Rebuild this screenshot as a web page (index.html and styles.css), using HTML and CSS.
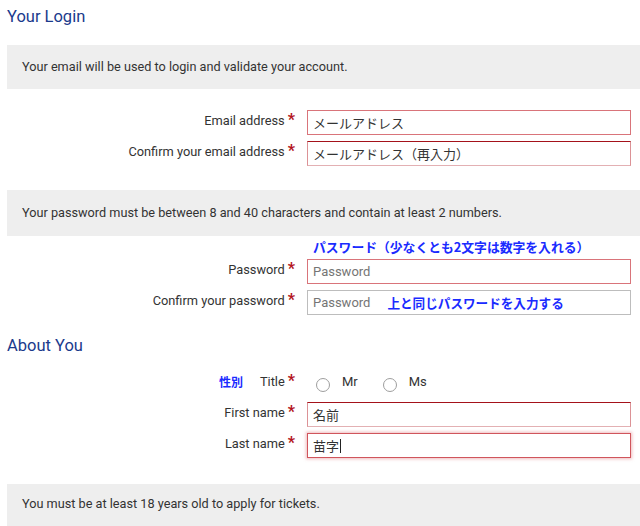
FILE: index.html
```html
<!DOCTYPE html>
<html lang="ja">
<head>
<meta charset="utf-8">
<title>Your Login</title>
<link rel="stylesheet" href="styles.css">
</head>
<body>
<div class="page">
  <h2 class="section-title">Your Login</h2>
  <div class="notice notice-first">Your email will be used to login and validate your account.</div>

  <div class="form-block form-email">
    <div class="form-row">
      <div class="label">Email address<span class="req">*</span></div>
      <div class="input input-error">メールアドレス</div>
    </div>
    <div class="form-row">
      <div class="label">Confirm your email address<span class="req">*</span></div>
      <div class="input input-error-dark">メールアドレス（再入力）</div>
    </div>
  </div>

  <div class="notice notice-password">Your password must be between 8 and 40 characters and contain at least 2 numbers.</div>

  <div class="form-block form-password">
    <div class="annotation-row"><span class="annotation">パスワード（少なくとも2文字は数字を入れる）</span></div>
    <div class="form-row">
      <div class="label">Password<span class="req">*</span></div>
      <div class="input input-error"><span class="placeholder">Password</span></div>
    </div>
    <div class="form-row">
      <div class="label">Confirm your password<span class="req">*</span></div>
      <div class="input input-plain"><span class="placeholder">Password</span><span class="annotation annotation-inline">上と同じパスワードを入力する</span></div>
    </div>
  </div>

  <h2 class="section-title section-about">About You</h2>

  <div class="form-block form-about">
    <div class="form-row title-row">
      <div class="label"><span class="annotation annotation-label">性別</span>Title<span class="req">*</span></div>
      <div class="radios">
        <label class="radio"><span class="radio-circle"></span><span class="radio-text">Mr</span></label>
        <label class="radio"><span class="radio-circle"></span><span class="radio-text">Ms</span></label>
      </div>
    </div>
    <div class="form-row">
      <div class="label">First name<span class="req">*</span></div>
      <div class="input input-error-dark">名前</div>
    </div>
    <div class="form-row">
      <div class="label">Last name<span class="req">*</span></div>
      <div class="input input-focus">苗字<span class="caret"></span></div>
    </div>
  </div>

  <div class="notice notice-age">You must be at least 18 years old to apply for tickets.</div>
</div>
</body>
</html>
```

FILE: styles.css
```css
html, body {
  margin: 0;
  padding: 0;
  background: #ffffff;
}

body {
  font-family: Roboto, "Noto Sans CJK JP", sans-serif;
  color: #333333;
  overflow: hidden;
}

.page {
  padding-left: 7px;
  padding-top: 6px;
}

.section-title {
  margin: 0;
  font-family: Roboto, sans-serif;
  font-weight: 400;
  font-size: 16.5px;
  line-height: 21px;
  color: #1b3a8c;
}

.section-about {
  margin-top: 20px;
}

.notice {
  background: #eeeeee;
  font-size: 12.7px;
  line-height: 14px;
  color: #333333;
  padding: 15px 15px;
  display: flex;
  align-items: center;
}

.notice-first {
  margin-top: 18px;
  height: 14px;
}

.notice-password {
  margin-top: 24px;
  height: 16px;
}

.notice-age {
  margin-top: 26px;
  height: 14px;
  padding-top: 13px;
}

.form-block {
  display: flex;
  flex-direction: column;
  gap: 6px;
}

.form-email {
  margin-top: 21px;
}

.form-password {
  margin-top: 4px;
  gap: 6px;
}

.form-about {
  margin-top: 16px;
}

.form-row {
  display: flex;
  align-items: center;
  height: 25px;
}

.label {
  width: 289px;
  flex: none;
  text-align: right;
  font-size: 12.8px;
  color: #333333;
  display: flex;
  justify-content: flex-end;
  align-items: center;
  position: relative;
  top: -2px;
}

.req {
  color: #b3151c;
  font-weight: 700;
  font-size: 16px;
  margin-left: 3px;
  margin-right: 1px;
  position: relative;
  top: -1px;
}

.input {
  margin-left: 11px;
  width: 317px;
  height: 23px;
  box-sizing: content-box;
  border: 1px solid #cccccc;
  display: flex;
  align-items: center;
  padding-left: 5px;
  font-size: 13px;
  font-family: Roboto, "Noto Sans CJK JP", sans-serif;
  color: #333333;
}

.input-error {
  border-color: #d9747a;
}

.input-error-dark {
  border-color: #dc9296;
  border-top-color: #a4121a;
  border-bottom-color: #e3b0b3;
}

.input-focus {
  border-color: #d0555c;
  box-shadow: 0 0 3px 1px rgba(226, 130, 136, 0.55);
}

.input-plain {
  border-color: #bdbdbd;
}

.placeholder {
  color: #757575;
}

.caret {
  display: inline-block;
  width: 1px;
  height: 14px;
  background: #222222;
  margin-left: 1px;
}

.annotation-row {
  padding-left: 306px;
  height: 13px;
  display: flex;
  align-items: center;
}

.annotation {
  font-family: "Noto Sans CJK JP", sans-serif;
  font-weight: 700;
  font-size: 12.8px;
  color: #1a2bff;
}

.annotation-inline {
  font-size: 12.6px;
  margin-left: 17px;
}

.annotation-label {
  margin-right: 17px;
  font-size: 12px;
}

.title-row {
  height: 24px;
}

.title-row .label {
  top: -3px;
}

.radios {
  margin-left: 20px;
  display: flex;
  gap: 25px;
}

.radio {
  display: flex;
  align-items: center;
  font-size: 13px;
  color: #333333;
}

.radio-circle {
  width: 12px;
  height: 12px;
  border: 1px solid #9e9e9e;
  border-radius: 50%;
  position: relative;
  top: 1px;
}

.radio-text {
  margin-left: 12px;
  position: relative;
  top: -3px;
}
```
